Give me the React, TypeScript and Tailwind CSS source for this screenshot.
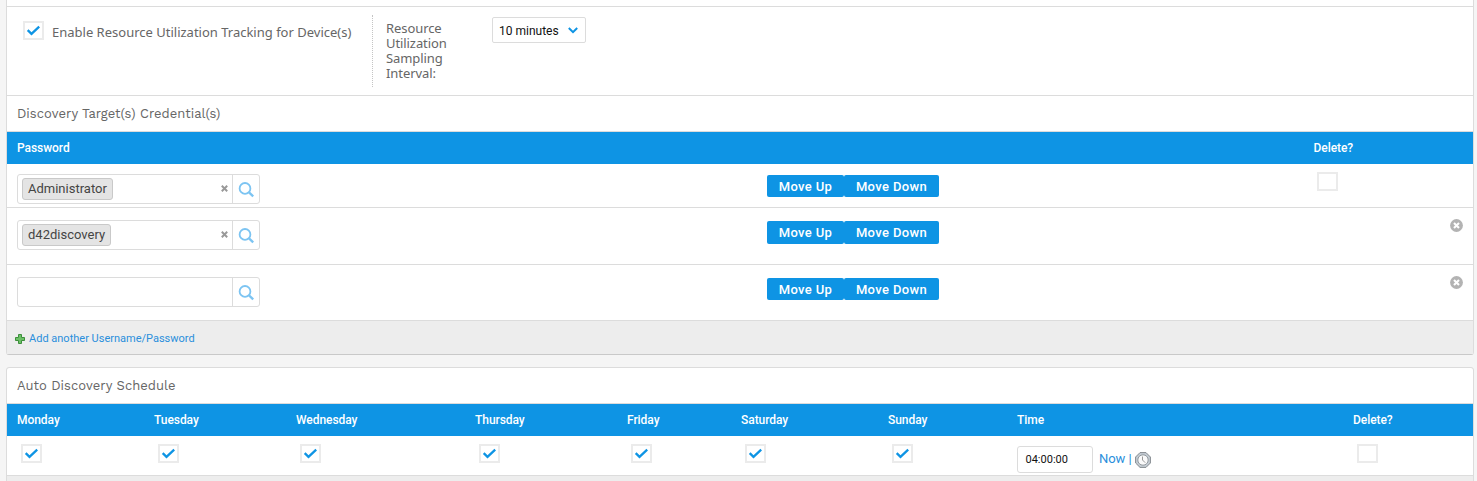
import React from "react";

const credentials = [
  { name: "Administrator", saved: true, row: "h-[44px] pt-[10px]", buttons: "h-[22px] leading-[23px]" },
  { name: "d42discovery", saved: false, row: "h-[57px] pt-[12px]", buttons: "h-[23px] leading-[22px]" },
  { name: "", saved: false, row: "h-[56px] pt-[12px]", buttons: "h-[22px] leading-[23px]" },
];

const days = ["Monday", "Tuesday", "Wednesday", "Thursday", "Friday", "Saturday", "Sunday"];

const scheduleGrid =
  "grid grid-cols-[137px_142px_179px_152px_114px_147px_129px_336px_1fr] pl-[10px]";

function Checkbox({ checked = false }: { checked?: boolean }) {
  return (
    <span className="block h-[19px] w-[21px] shrink-0 border-2 border-[#ebebeb] bg-white">
      {checked && (
        <svg viewBox="0 0 17 15" className="h-[15px] w-[17px]" fill="none" stroke="#0e94e4" strokeWidth="2.3">
          <path d="M2.7 7.1 6.5 10.8 14.2 3.7" />
        </svg>
      )}
    </span>
  );
}

function SearchIcon() {
  return (
    <svg viewBox="0 0 16 16" className="h-4 w-4" fill="none" stroke="#7cc4f2">
      <circle cx="7" cy="6.4" r="5.4" strokeWidth="1.8" />
      <path d="M11 10.3 15.2 14.3" strokeWidth="2.3" />
    </svg>
  );
}

function CloseIcon() {
  return (
    <svg viewBox="0 0 13 13" className="h-[13px] w-[13px]">
      <circle cx="6.5" cy="6.5" r="6.4" fill="#b3b3b3" />
      <path d="M4 4 9 9M9 4 4 9" stroke="#fff" strokeWidth="2.1" />
    </svg>
  );
}

function PlusIcon() {
  return (
    <svg viewBox="0 0 10 10" className="mt-px h-[10px] w-[10px]">
      <path d="M3.5.5h3v3h3v3h-3v3h-3v-3h-3v-3h3z" fill="#6cc066" stroke="#3c8f3b" />
    </svg>
  );
}

function ClockIcon() {
  return (
    <svg viewBox="0 0 16 16" className="h-4 w-4" fill="none">
      <path d="M5 .6h6L15.4 5v6L11 15.4H5L.6 11V5z" fill="#c5cdd4" stroke="#858b90" />
      <circle cx="8" cy="8" r="5.2" fill="#fafafa" stroke="#92999f" />
      <path d="M7.5 4.5V8l2.7 2.7" stroke="#999" />
    </svg>
  );
}

function PasswordField({ name }: { name: string }) {
  return (
    <div className="flex h-[30px] w-[243px] rounded-[3px] border border-[#dcdcdc] bg-white">
      <div className="flex flex-1 items-start pl-1 pt-[3px]">
        {name && (
          <>
            <span className="h-[22px] rounded-[3px] border border-[#c9c9c9] bg-[#e4e4e4] px-[5px] text-[13px] leading-[20px] text-[#444]">
              {name}
            </span>
            <svg viewBox="0 0 7 7" className="ml-auto mr-[4px] mt-[7px] h-[7px] w-[7px]" stroke="#999" strokeWidth="2">
              <path d="M.8.8 6.2 6.2M6.2.8.8 6.2" />
            </svg>
          </>
        )}
      </div>
      <div className="flex w-[27px] border-l border-[#dcdcdc] pl-[5px] pt-[7px]">
        <SearchIcon />
      </div>
    </div>
  );
}

function MoveButtons({ size }: { size: string }) {
  const base = "rounded-[2px] bg-[#0e94e4] text-[13px] font-medium tracking-[0.36px] text-white";
  return (
    <div className="flex">
      <button className={`${base} ${size} w-[77px]`}>Move Up</button>
      <button className={`${base} ${size} w-[95px]`}>Move Down</button>
    </div>
  );
}

function PanelTitle({ children }: { children: React.ReactNode }) {
  return (
    <h2 className="h-[36px] border-b border-[#dcdcdc] pl-[10px] font-['Work_Sans','IBM_Plex_Sans','Noto_Sans',sans-serif] text-[13px] leading-[35px] tracking-[0.02px] text-[#666]">
      {children}
    </h2>
  );
}

export default function App() {
  return (
    <main className="h-[481px] overflow-hidden bg-[#f5f5f5] pl-[6px] pr-[3px] font-[Roboto,sans-serif]">
      <section className="h-[355px] rounded-b-[3px] border-x border-b border-[#dcdcdc] border-b-[#c9c9c9] bg-white">
        <div className="h-[7px] border-b border-[#dcdcdc]" />
        <div className="flex h-[89px] border-b border-[#dcdcdc] pt-2 font-['Noto_Sans',sans-serif] text-[13px] text-[#666]">
          <label className="flex w-[365px] pl-4 pt-[6px]">
            <Checkbox checked />
            <span className="ml-[8px] mt-[2px] whitespace-nowrap leading-[18px]">
              Enable Resource Utilization Tracking for Device(s)
            </span>
          </label>
          <div className="flex h-[72px] border-l border-dotted border-[#c4c4c4] pl-[13px]">
            <p className="mt-[6px] w-[106px] leading-[15px] tracking-[-0.08px]">
              Resource
              <br />
              Utilization
              <br />
              Sampling
              <br />
              Interval:
            </p>
            <div className="mt-[2px] flex h-[26px] w-[94px] items-center rounded-[2px] border border-[#dcdcdc] pl-[6px] font-[Roboto,sans-serif] text-[12px] text-[#111]">
              <span className="mt-px">10 minutes</span>
              <svg viewBox="0 0 10 7" className="ml-auto mr-[7px] h-[7px] w-[10px]" fill="none" stroke="#0e94e4" strokeWidth="2">
                <path d="M.8 1 5 5.2 9.2 1" />
              </svg>
            </div>
          </div>
        </div>
        <PanelTitle>Discovery Target(s) Credential(s)</PanelTitle>
        <div className="flex h-[32px] bg-[#0e94e4] pl-[10px] text-[12px] font-medium leading-[32px] tracking-[-0.05px] text-white">
          <span className="w-[1296.5px]">Password</span>
          <span>Delete?</span>
        </div>
        {credentials.map((c, i) => (
          <div key={i} className={`${c.row} flex items-start border-b border-[#dcdcdc] pl-[10px] pr-[10.5px]`}>
            <div className="w-[750px]">
              <PasswordField name={c.name} />
            </div>
            <div className="mt-px w-[550px]">
              <MoveButtons size={c.buttons} />
            </div>
            {c.saved ? (
              <div className="-mt-[2px]">
                <Checkbox />
              </div>
            ) : (
              <div className="-mt-[1px] ml-auto">
                <CloseIcon />
              </div>
            )}
          </div>
        ))}
        <div className="flex h-[33px] items-center bg-[#ededed] pl-2 pt-[2px] text-[11px] text-[#2a8fdc]">
          <PlusIcon />
          <a className="ml-[4px] mt-px">Add another Username/Password</a>
        </div>
      </section>

      <section className="mt-[12px] h-[130px] rounded-t-[3px] border border-[#dcdcdc] bg-[#ededed]">
        <div className="rounded-t-[3px] bg-white">
          <PanelTitle>Auto Discovery Schedule</PanelTitle>
          <div className={`${scheduleGrid} h-[32px] bg-[#0e94e4] text-[12px] font-medium leading-[32px] tracking-[-0.05px] text-white`}>
            {days.map((d) => (
              <span key={d}>{d}</span>
            ))}
            <span>Time</span>
            <span>Delete?</span>
          </div>
          <div className={`${scheduleGrid} h-[40px] border-b border-[#dcdcdc]`}>
            {days.map((d) => (
              <div key={d} className="pl-1 pt-2">
                <Checkbox checked />
              </div>
            ))}
            <div className="flex items-start pt-[10px] text-[13px] text-[#2a8fdc]">
              <div className="h-[27px] w-[76px] rounded-[3px] border border-[#dcdcdc] pl-[7.5px] text-[11px] leading-[26px] text-[#111]">
                04:00:00
              </div>
              <span className="ml-[6px] mt-[3px] leading-[20px] tracking-[-0.05px]">Now |</span>
              <span className="ml-[3px] mt-[5.5px]">
                <ClockIcon />
              </span>
            </div>
            <div className="pl-1 pt-2">
              <Checkbox />
            </div>
          </div>
        </div>
      </section>
    </main>
  );
}
